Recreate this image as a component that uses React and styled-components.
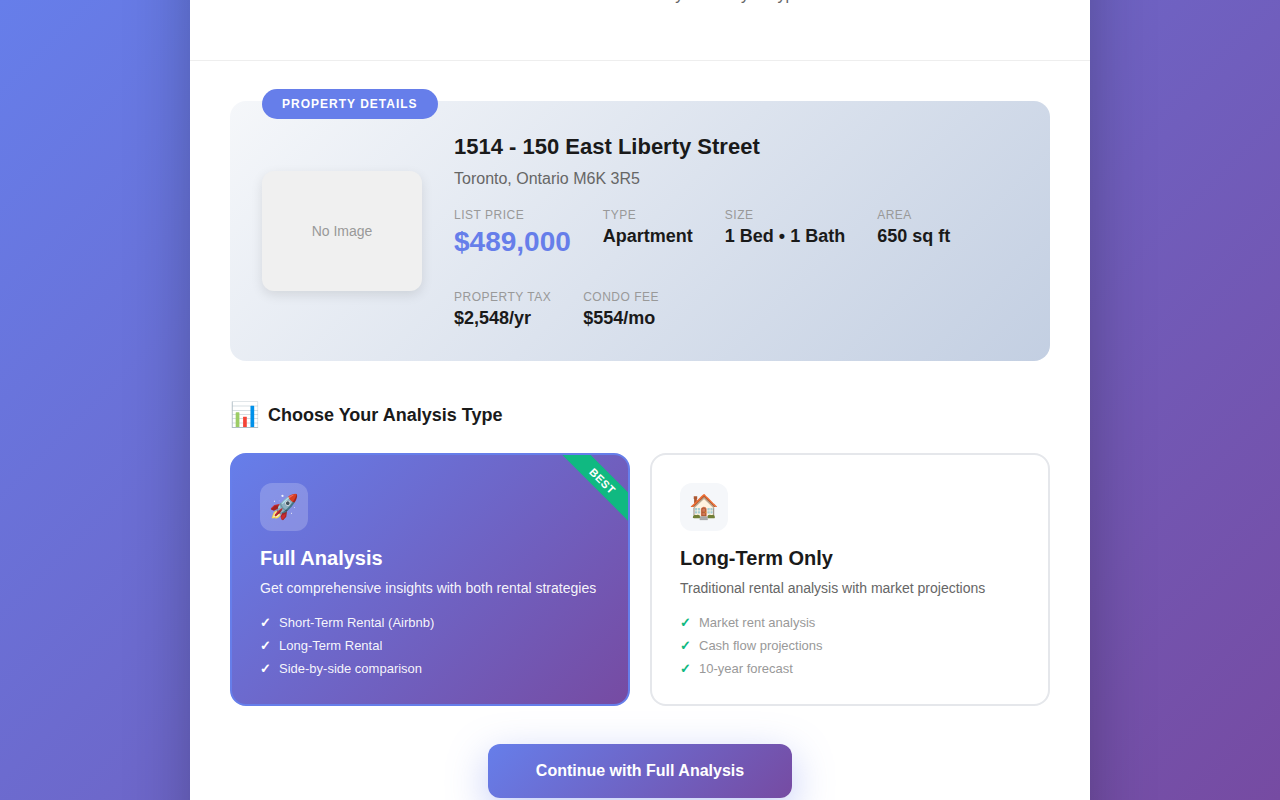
import React from "react";
import styled, { createGlobalStyle, css } from "styled-components";

const brand = "linear-gradient(135deg, #667eea 0%, #764ba2 100%)";

const GlobalStyle = createGlobalStyle`
  * { box-sizing: border-box; margin: 0; padding: 0; }
  body {
    font-family: "Liberation Sans", Arial, sans-serif;
    color: #1a1a1a;
  }
`;

const Page = styled.div`
  height: 100vh;
  overflow: hidden;
  display: flex;
  justify-content: center;
  align-items: flex-start;
  background: ${brand};
`;

const Sheet = styled.main`
  flex: none;
  width: 900px;
  height: 1120px;
  margin-top: -120px;
  background: #fff;
  box-shadow: 0 20px 60px rgba(0, 0, 0, 0.25);
`;

const Header = styled.header`
  height: 181px;
  padding-bottom: 56px;
  display: flex;
  align-items: flex-end;
  justify-content: center;
  border-bottom: 1px solid #eee;
`;

const Lead = styled.p`
  font-size: 16px;
  line-height: 18px;
  color: #666;
`;

const Content = styled.div`
  padding: 40px;
`;

const PropertyPanel = styled.section`
  position: relative;
  display: flex;
  align-items: center;
  gap: 32px;
  height: 260px;
  padding: 32px;
  margin-bottom: 40px;
  border-radius: 16px;
  background: linear-gradient(135deg, #f5f7fa 0%, #c3cfe2 100%);
`;

const PanelBadge = styled.span`
  position: absolute;
  top: -12px;
  left: 32px;
  padding: 8px 20px;
  border-radius: 20px;
  background: #667eea;
  color: #fff;
  font-size: 12px;
  line-height: 14px;
  font-weight: 700;
  letter-spacing: 1px;
`;

const Photo = styled.div`
  flex: none;
  width: 160px;
  height: 120px;
  display: flex;
  align-items: center;
  justify-content: center;
  border-radius: 12px;
  background: #f0f0f0;
  box-shadow: 0 4px 12px rgba(0, 0, 0, 0.1);
  color: #999;
  font-size: 14px;
`;

const Details = styled.div`
  flex: 1;
`;

const Address = styled.h2`
  font-size: 22px;
  line-height: 27px;
  margin-bottom: 10px;
`;

const City = styled.p`
  font-size: 16px;
  line-height: 18px;
  margin-bottom: 20px;
  color: #666;
`;

const Stats = styled.div`
  display: flex;
  flex-wrap: wrap;
  gap: 32px;
`;

const Stat = styled.div`
  display: flex;
  flex-direction: column;
  gap: 4px;
`;

const StatLabel = styled.span`
  font-size: 12px;
  line-height: 14px;
  letter-spacing: 0.5px;
  color: #999;
`;

const StatValue = styled.span`
  font-weight: 700;
  font-size: ${(p) => (p.$price ? "28px" : "18px")};
  line-height: ${(p) => (p.$price ? "32px" : "21px")};
  color: ${(p) => (p.$price ? "#667eea" : "#1a1a1a")};
`;

const SectionTitle = styled.h3`
  display: flex;
  align-items: center;
  gap: 8px;
  height: 28px;
  margin-bottom: 24px;
  font-size: 18px;
`;

const TitleIcon = styled.span`
  font-size: 24px;
  line-height: 28px;
`;

const Options = styled.div`
  display: grid;
  grid-template-columns: 1fr 1fr;
  gap: 20px;
  margin-bottom: 38px;
`;

const OptionIcon = styled.div`
  width: 48px;
  height: 48px;
  display: flex;
  align-items: center;
  justify-content: center;
  margin-bottom: 16px;
  border-radius: 12px;
  background: #f5f7fa;
  font-size: 24px;
`;

const OptionTitle = styled.h4`
  font-size: 20px;
  line-height: 23px;
  margin-bottom: 8px;
`;

const OptionText = styled.p`
  font-size: 14px;
  line-height: 21px;
  margin-bottom: 16px;
  color: #666;
`;

const Features = styled.ul`
  display: flex;
  flex-direction: column;
  gap: 8px;
  list-style: none;
`;

const Feature = styled.li`
  display: flex;
  align-items: center;
  gap: 8px;
  font-size: 13px;
  line-height: 15px;
  color: #999;

  &::before {
    content: "✓";
    font-weight: 700;
    color: #10b981;
  }
`;

const Option = styled.article`
  position: relative;
  overflow: hidden;
  padding: 28px;
  border: 2px solid #e5e7eb;
  border-radius: 16px;
  background: #fff;

  ${(p) =>
    p.$selected &&
    css`
      border-color: #667eea;
      background: ${brand};
      color: #fff;

      ${OptionIcon} { background: rgba(255, 255, 255, 0.2); }
      ${OptionText} { color: rgba(255, 255, 255, 0.95); }
      ${Feature} { color: rgba(255, 255, 255, 0.95); }
      ${Feature}::before { color: #fff; }
    `}
`;

const Ribbon = styled.span`
  position: absolute;
  top: 16px;
  right: -30px;
  width: 111px;
  padding: 4px 0;
  background: #10b981;
  color: #fff;
  font-size: 11px;
  line-height: 12px;
  font-weight: 700;
  letter-spacing: 0.5px;
  text-align: center;
  transform: rotate(45deg);
`;

const Actions = styled.div`
  display: flex;
  justify-content: center;
`;

const PrimaryButton = styled.button`
  padding: 18px 48px;
  border: 0;
  border-radius: 12px;
  background: ${brand};
  box-shadow: 0 12px 40px rgba(102, 126, 234, 0.4);
  color: #fff;
  font: 700 16px/18px "Liberation Sans", Arial, sans-serif;
`;

const stats = [
  { label: "LIST PRICE", value: "$489,000", price: true },
  { label: "TYPE", value: "Apartment" },
  { label: "SIZE", value: "1 Bed • 1 Bath" },
  { label: "AREA", value: "650 sq ft" },
  { label: "PROPERTY TAX", value: "$2,548/yr" },
  { label: "CONDO FEE", value: "$554/mo" },
];

const options = [
  {
    icon: "🚀",
    title: "Full Analysis",
    text: "Get comprehensive insights with both rental strategies",
    features: ["Short-Term Rental (Airbnb)", "Long-Term Rental", "Side-by-side comparison"],
    ribbon: "BEST",
    selected: true,
  },
  {
    icon: "🏠",
    title: "Long-Term Only",
    text: "Traditional rental analysis with market projections",
    features: ["Market rent analysis", "Cash flow projections", "10-year forecast"],
  },
];

export default function App() {
  return (
    <Page>
      <GlobalStyle />
      <Sheet>
        <Header>
          <Lead>Confirm details and choose your analysis type</Lead>
        </Header>
        <Content>
          <PropertyPanel>
            <PanelBadge>PROPERTY DETAILS</PanelBadge>
            <Photo>No Image</Photo>
            <Details>
              <Address>1514 - 150 East Liberty Street</Address>
              <City>Toronto, Ontario M6K 3R5</City>
              <Stats>
                {stats.map((s) => (
                  <Stat key={s.label}>
                    <StatLabel>{s.label}</StatLabel>
                    <StatValue $price={s.price}>{s.value}</StatValue>
                  </Stat>
                ))}
              </Stats>
            </Details>
          </PropertyPanel>

          <SectionTitle>
            <TitleIcon>📊</TitleIcon>
            Choose Your Analysis Type
          </SectionTitle>

          <Options>
            {options.map((o) => (
              <Option key={o.title} $selected={o.selected}>
                {o.ribbon && <Ribbon>{o.ribbon}</Ribbon>}
                <OptionIcon>{o.icon}</OptionIcon>
                <OptionTitle>{o.title}</OptionTitle>
                <OptionText>{o.text}</OptionText>
                <Features>
                  {o.features.map((f) => (
                    <Feature key={f}>{f}</Feature>
                  ))}
                </Features>
              </Option>
            ))}
          </Options>

          <Actions>
            <PrimaryButton>Continue with Full Analysis</PrimaryButton>
          </Actions>
        </Content>
      </Sheet>
    </Page>
  );
}
